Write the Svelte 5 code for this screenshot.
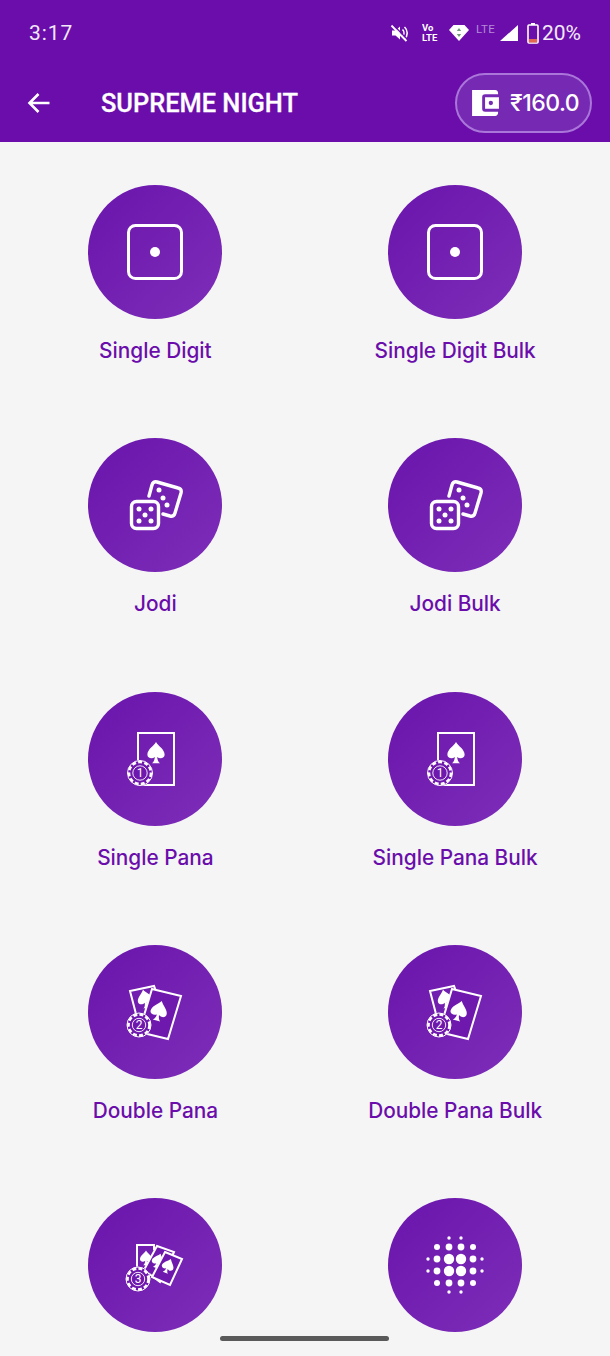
<script>
  const games = [
    { name: 'Single Digit', icon: 'one' }, { name: 'Single Digit Bulk', icon: 'one' },
    { name: 'Jodi', icon: 'dice' }, { name: 'Jodi Bulk', icon: 'dice' },
    { name: 'Single Pana', icon: 'c1' }, { name: 'Single Pana Bulk', icon: 'c1' },
    { name: 'Double Pana', icon: 'c2' }, { name: 'Double Pana Bulk', icon: 'c2' },
    { name: '', icon: 'c3' }, { name: '', icon: 'dots' }
  ];
  const spade = 'M0-9.5C2.5-5.5 7.5-3 7.5 1.5 7.5 4.5 3.5 5.5 1 3.5 1.2 6 2 8 3.5 9L-3.5 9C-2 8-1.2 6-1 3.5-3.5 5.5-7.5 4.5-7.5 1.5-7.5-3-2.5-5.5 0-9.5Z';
  const halftone = [];
  for (const x of [-18, -6, 6, 18]) for (const y of [-18, -6, 6, 18]) {
    const n = (Math.abs(x) === 6 ? 1 : 0) + (Math.abs(y) === 6 ? 1 : 0);
    halftone.push({ x, y, r: n === 2 ? 5.2 : n === 1 ? 3.4 : 3 });
  }
  for (const a of [-6, 6]) for (const b of [-27, 27]) {
    halftone.push({ x: a, y: b, r: 1.7 }, { x: b, y: a, r: 1.7 });
  }
</script>

{#snippet chip(x, y, r, n)}
  <g transform="translate({x} {y})">
    <circle r={r + 2} fill="#6f18ae" />
    <circle r={r} fill="none" stroke="#fff" stroke-width="2.600" stroke-dasharray="4 2.200" />
    <circle r={r + 1.500} fill="none" stroke="#fff" stroke-width="1" />
    <circle r={r - 3.800} fill="none" stroke="#fff" stroke-width="0.9" />
    <text class="chipnum" y="4" text-anchor="middle">{n}</text>
  </g>
{/snippet}

{#snippet glyph(kind)}
  <svg class="glyph" viewBox="0 0 134 134" width="134" height="134">
    {#if kind === 'one'}
      <rect x="40.500" y="40.500" width="53" height="53" rx="7" fill="none" stroke="#fff" stroke-width="3" />
      <circle cx="67" cy="67" r="5" fill="#fff" />
    {:else if kind === 'dice'}
      <path d="M61 58 L64 47 Q65 43 69 44 L90 50 Q94 51 93 55 L87 75 Q86 79 82 78 L75 76" fill="none" stroke="#fff" stroke-width="3.400" stroke-linecap="round" />
      <rect x="43.500" y="63.500" width="27" height="27" rx="5" fill="none" stroke="#fff" stroke-width="3.400" />
      {#each [[71, 52], [75, 60], [79, 67]] as d}<circle cx={d[0]} cy={d[1]} r="2.500" fill="#fff" />{/each}
      {#each [[51, 71], [63, 71], [57, 77], [51, 83], [63, 83]] as d}<circle cx={d[0]} cy={d[1]} r="2.500" fill="#fff" />{/each}
    {:else if kind === 'c1'}
      <rect x="50" y="41" width="36" height="52" fill="none" stroke="#fff" stroke-width="2" />
      <path d={spade} fill="#fff" transform="translate(68 61) scale(1.150)" />
      {@render chip(52, 81, 11, 1)}
    {:else if kind === 'c2'}
      <path d="M48 69 L42 46 L66 41 L68 46" fill="none" stroke="#fff" stroke-width="2" />
      <path d={spade} fill="#fff" transform="translate(57 54) rotate(-12)" />
      <path d="M64 44 L93 51 L80 94 L51 87 Z" fill="#6f18ae" stroke="#fff" stroke-width="2" />
      <path d={spade} fill="#fff" transform="translate(71 66) rotate(15) scale(1.100)" />
      {@render chip(51, 80, 10.500, 2)}
    {:else if kind === 'c3'}
      <path d="M49 76 L49 47 L66 47 L66 52" fill="none" stroke="#fff" stroke-width="2" />
      <path d={spade} fill="#fff" transform="translate(58 60) scale(.8)" />
      <path d="M69 48 L86 54 L72 84 L56 72 Z" fill="#6f18ae" stroke="#fff" stroke-width="2" />
      <path d={spade} fill="#fff" transform="translate(70 63) rotate(20) scale(.8)" />
      <path d="M77 54 L94 61 L82 87 L64 79 Z" fill="#6f18ae" stroke="#fff" stroke-width="2" />
      <path d={spade} fill="#fff" transform="translate(80 68) rotate(22) scale(.8)" />
      {@render chip(50, 81, 10.500, 3)}
    {:else}
      {#each halftone as d}<circle cx={67 + d.x} cy={67 + d.y} r={d.r} fill="#fff" />{/each}
    {/if}
  </svg>
{/snippet}

<div class="page">
  <header>
    <div class="status">
      <span class="time">3:17</span>
      <div class="sysicons">
        <svg class="mute" viewBox="0 0 20 20" width="20" height="20">
          <path d="M3 7.500h3.500L11 3.500v13L6.500 12.500H3Z" fill="#fff" />
          <path d="M13.500 6.500a5 5 0 0 1 0 7M15.500 4a8 8 0 0 1 0 12" fill="none" stroke="#fff" stroke-width="1.600" />
          <path d="M2.500 2.500 17.500 18" stroke="#fff" stroke-width="2" /><path d="M4 1.500 19 17" stroke="#6a0dab" stroke-width="1.200" />
        </svg>
        <div class="volte"><span>Vo</span><span>LTE</span></div>
        <svg class="wifi" viewBox="0 0 20 16" width="20" height="16">
          <path d="M0 5 4.500 0h11L20 5 10 16Z" fill="#fff" />
          <path d="M10 3 7.800 6h4.400ZM10 12 7.800 9h4.400Z" fill="#6f9a78" />
        </svg>
        <span class="lte">LTE</span>
        <svg class="signal" viewBox="0 0 18 16" width="18" height="16"><path d="M18 0V16H0Z" fill="#fff" /></svg>
        <svg class="battery" viewBox="0 0 12 21" width="12" height="21">
          <rect x="4" y="0" width="4" height="2" fill="#fff" />
          <rect x="1" y="2" width="10" height="18" rx="1" fill="none" stroke="#fff" stroke-width="1.600" />
          <rect x="2" y="16" width="8" height="3.500" fill="#e4664f" />
        </svg>
        <span class="pct">20%</span>
      </div>
    </div>
    <div class="toolbar">
      <div class="left">
        <svg class="back" viewBox="0 0 24 24" width="24" height="24">
          <path d="M22.500 12H3M11.500 3 2.500 12l9 9" fill="none" stroke="#fff" stroke-width="2.600" />
        </svg>
        <h1>SUPREME NIGHT</h1>
      </div>
      <div class="wallet">
        <svg viewBox="3 3 18.600 18" width="27" height="26">
          <path d="M21 18v1c0 1.100-.9 2-2 2H3V3h16c1.100 0 2 .9 2 2v1h-9a2 2 0 0 0-2 2v8a2 2 0 0 0 2 2h9zm-9-2h9.600V8H12v8zm4-2.500a1.500 1.500 0 1 1 0-3 1.500 1.500 0 0 1 0 3z" fill="#fff" />
        </svg>
        <span>₹160.0</span>
      </div>
    </div>
  </header>

  <main>
    {#each games as g}
      <div class="item">
        <div class="disc">{@render glyph(g.icon)}</div>
        {#if g.name}<div class="label">{g.name}</div>{/if}
      </div>
    {/each}
  </main>

  <div class="home"></div>
</div>

<style>
  :global(body) { margin: 0; background: #f5f5f5; overflow: hidden; }
  .page { position: relative; width: 610px; height: 1356px; overflow: hidden; background: #f5f5f5; font-family: Roboto, sans-serif; }
  header { background: #6a0dab; height: 142px; box-sizing: border-box; padding: 0 18px 0 0; color: #fff; }
  .status { height: 64px; display: flex; align-items: center; justify-content: space-between; padding: 2px 29px 0 29px; margin-right: -18px; box-sizing: border-box; }
  .time { font-size: 21px; letter-spacing: .9px; color: #f3e9f8; }
  .sysicons { display: flex; align-items: center; }
  .mute { margin-right: 13px; }
  .volte { display: flex; flex-direction: column; width: 18px; margin-right: 9px; font: 700 9.500px/10px Roboto, sans-serif; white-space: nowrap; overflow: hidden; }
  .wifi { margin-right: 7px; }
  .lte { width: 24px; font-size: 11.500px; margin-top: -9px; color: #b48bd6; letter-spacing: .4px; }
  .signal { margin-right: 9px; }
  .battery { margin-right: 3px; }
  .pct { font-size: 21px; color: #f3e9f8; }
  .toolbar { height: 78px; display: flex; align-items: center; justify-content: space-between; padding: 0 0 0 27px; }
  .left { display: flex; align-items: center; }
  .back { margin-right: 50px; }
  h1 { margin: 0; font: 500 25.400px/30px Roboto, sans-serif; color: #fff; -webkit-text-stroke: .3px #fff; }
  .wallet { width: 137px; height: 60px; box-sizing: border-box; border: 2px solid #ab76da; border-radius: 30px; background: #7629b2; display: flex; align-items: center; gap: 11px; padding-left: 15px; font: 500 23px Inter, sans-serif; letter-spacing: -.5px; }
  main { display: grid; grid-template-columns: 1fr 1fr; padding: 43px 5px 0 5.500px; grid-auto-rows: 253.250px; }
  .item { display: flex; flex-direction: column; align-items: center; }
  .disc { width: 134px; height: 134px; border-radius: 50%; background: linear-gradient(135deg, #6a14ac, #7d2eb8); }
  .glyph { display: block; }
  .chipnum { font: 400 12px Roboto, sans-serif; fill: #fff; }
  .label { margin-top: 19px; font: 500 20.800px/26px Inter, sans-serif; color: #6a0dab; }
  .home { position: absolute; left: 220px; top: 1336px; width: 169px; height: 5px; border-radius: 3px; background: #5a5a5a; }
</style>
